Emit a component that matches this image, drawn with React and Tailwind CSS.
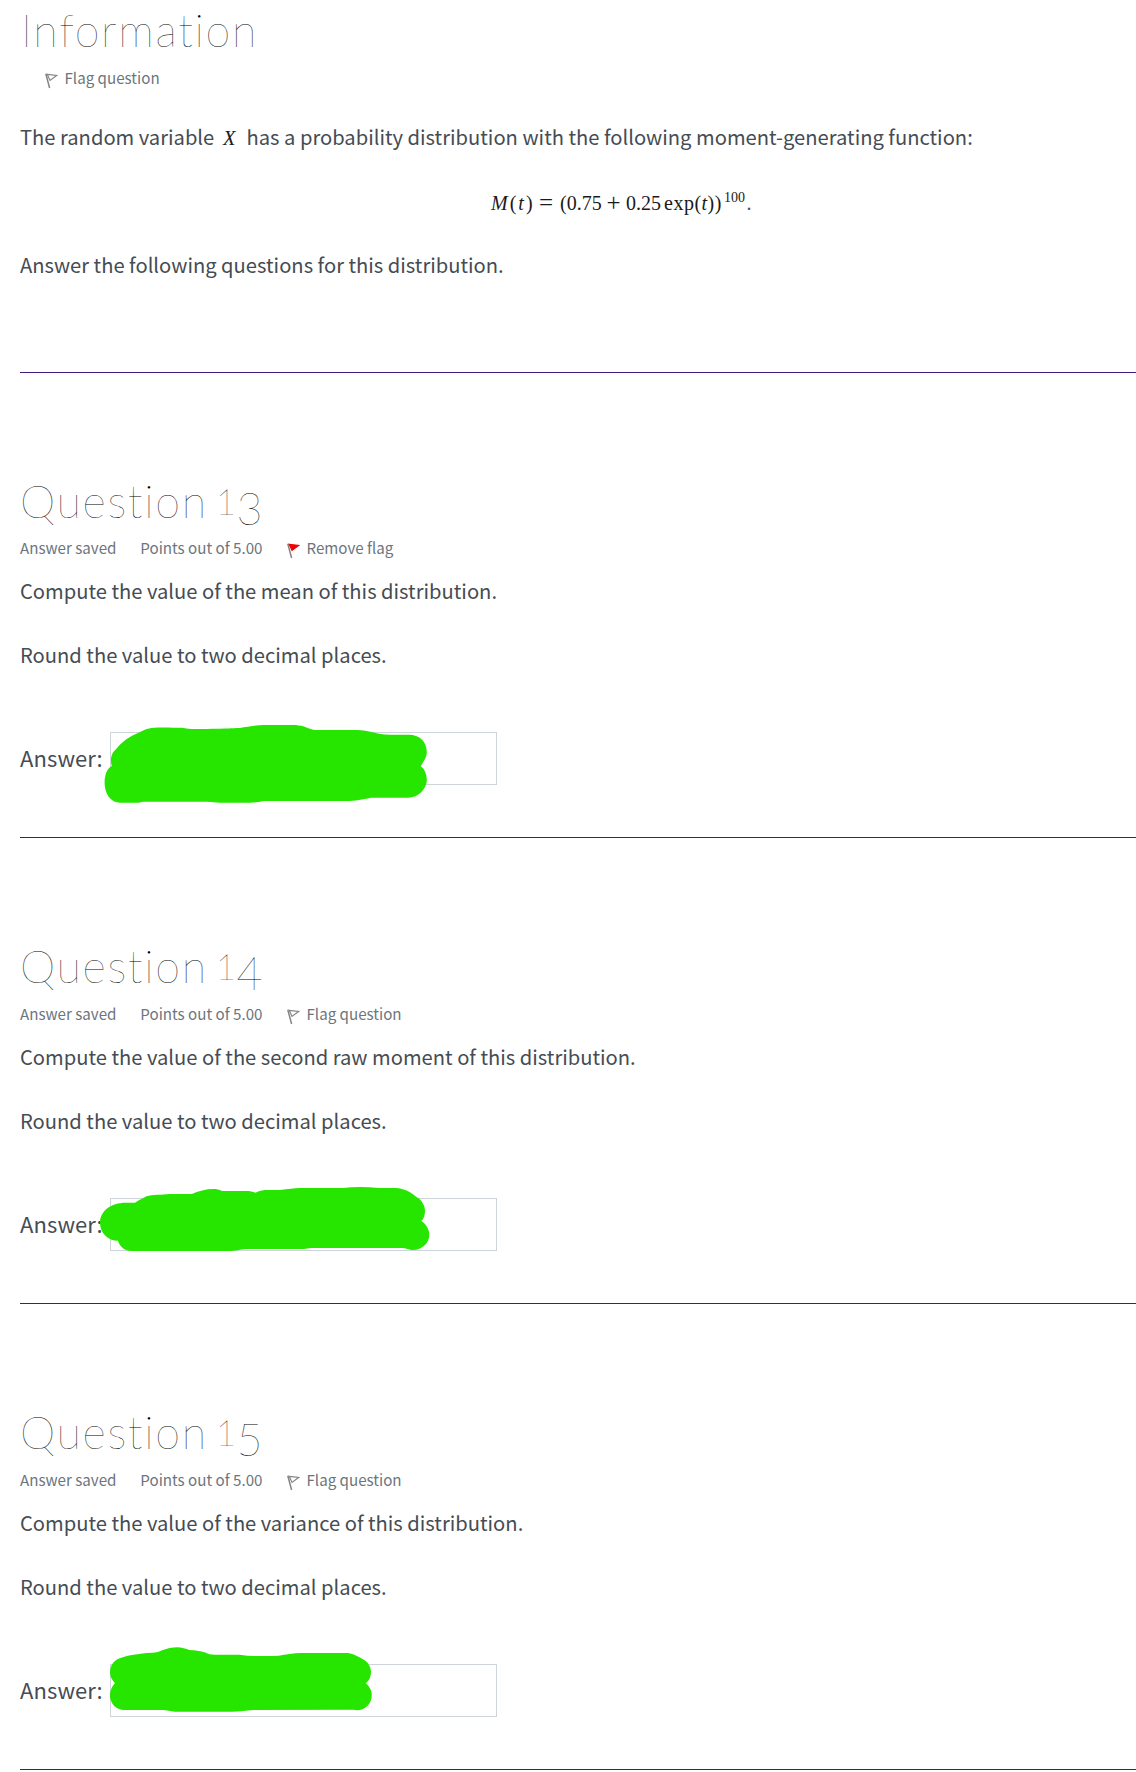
import React from "react";

const BODY = "text-[20.17px] leading-[32px] whitespace-nowrap";
const HEADING =
  "font-['Lato'] font-thin text-[45px] leading-[56px] h-[56px] tracking-[1.65px] text-black whitespace-nowrap";

function Flag({ active = false }) {
  return (
    <svg className="mt-[8px] h-4 w-[13px] shrink-0" viewBox="0 0 13 16" fill="none">
      <path d="M0.8 0.8 L4.6 15" stroke="#858585" strokeWidth="1.5" />
      <path
        d="M2.2 1.3 L11.6 2.5 L5 7.4 Z"
        stroke={active ? "#f00000" : "#858585"}
        fill={active ? "#f00000" : "none"}
        strokeWidth="1.2"
      />
    </svg>
  );
}

function FlagLink({ active }) {
  return (
    <span className="flex gap-[6.5px]">
      <Flag active={active} />
      <span>{active ? "Remove flag" : "Flag question"}</span>
    </span>
  );
}

function Information() {
  return (
    <section className="border-b border-[#42197c] pt-[2px] pb-[91px]">
      <h2 className={HEADING + " pl-px"}>Information</h2>
      <div className="mt-[7px] flex h-6 pl-[25px] text-[15.15px] leading-6 text-[#6c757d]">
        <FlagLink />
      </div>
      <p className={"mt-[32px] flex " + BODY}>
        <span className="w-[203px]">The random variable</span>
        <span className="w-[23.5px] translate-y-px font-['Liberation_Serif'] text-[20.5px] italic text-[#1a1a1a]">X</span>
        <span>has a probability distribution with the following moment-generating function:</span>
      </p>
      <div className="mt-[34px] flex h-8 pl-[471px] font-['Liberation_Serif'] text-[20px] leading-8 text-[#1a1a1a] whitespace-nowrap">
        <span className="w-[48px] tracking-[2px]">
          <i>M</i>(<i>t</i>)
        </span>
        <span className="w-[21px] text-[25px] font-['Liberation_Serif']">=</span>
        <span className="w-[46.5px]">(0.75</span>
        <span className="w-[19.5px] text-[25px]">+</span>
        <span className="w-[38px]">0.25</span>
        <span className="w-[60px] tracking-[0.5px]">
          exp(<i>t</i>))
        </span>
        <span className="w-[22.5px] -translate-y-[5px] text-[14px]">100</span>
        <span className="text-[#495057]">.</span>
      </div>
      <p className={"mt-[30px] " + BODY}>Answer the following questions for this distribution.</p>
    </section>
  );
}

function Question({ number, digit, flagged, text, first, children }) {
  return (
    <section className="border-b border-[#42197c] pt-[100px] pb-[52px]">
      <h2 className={HEADING + " flex"} aria-label={"Question " + number}>
        <span className="w-[195.5px]">Question</span>
        <span className="w-[21px] text-[36px] tracking-normal">1</span>
        <span className="translate-y-[7px]">{digit}</span>
      </h2>
      <div
        className={
          "flex h-6 text-[15.15px] leading-6 text-[#6c757d] " + (first ? "mt-[6px]" : "mt-[7px]")
        }
      >
        <span className="w-[120.3px]">Answer saved</span>
        <span className="w-[146.7px]">Points out of 5.00</span>
        <FlagLink active={flagged} />
      </div>
      <p className={"mt-[16px] " + BODY}>{text}</p>
      <p className={"mt-[32px] " + BODY}>Round the value to two decimal places.</p>
      <div className="relative mt-[61px] flex h-[53px] items-center">
        <span className="w-[90px] -translate-y-px text-[22px] tracking-[0.1px]">Answer:</span>
        <div className="h-[53px] w-[387px] border border-[#ced4da]" />
        <svg
          className="absolute -top-[22px] left-[70px] h-[96px] w-[350px]"
          viewBox="90 710 350 96"
          fill="#26e600"
        >
          {children}
        </svg>
      </div>
    </section>
  );
}

export default function App() {
  return (
    <main className="h-[1772px] w-[1136px] overflow-hidden bg-white pl-5 font-['Noto_Sans_CJK_SC',sans-serif] text-[#454c53]">
      <Information />
      <Question first number="13" digit="3" flagged text="Compute the value of the mean of this distribution.">
        <path d="M154 727.7 C163 727 174 727.7 182 727.7 C188 729 194 729 200 729 C209 729 217 728.7 225 728.5 C234 728.4 240 728 246 727 C252 725.8 258 725 264 725 L293 725 C297 725 300 725.5 304 726.5 C308 728 312 730 316 730 L357 730 C369 730 376 734.7 390 734.7 L409 734.7 C419 734.7 426.8 741 426.8 752 C426.8 758 423 762 420.7 766.3 C425 769 426.8 775 426.8 780 C426.8 789 418 797.7 408 797.7 L371 797.7 C362 799.5 356 801 346 801 L264 801 C258 802 255 802.7 250 802.7 L220 802.7 C215 802.7 212 801.7 207 801.7 L143 801.7 C140 802.7 137 802.7 134 802.7 L120 802.7 C111 802.7 104.6 794 104.6 783 C104.6 775 107 768 111.8 766 C110.5 762 110 754 116 749.3 C121 743 128 737 137.5 733.3 C142 731 147 728 154 727.7 Z" />
      </Question>
      <Question number="14" digit="4" text="Compute the value of the second raw moment of this distribution.">
        <path
          transform="translate(0 -466)"
          d="M125.7 1202.7 L135 1202.7 C139 1200 143 1198.5 146.4 1196.3 C152 1194.5 162 1195 169.6 1194 L191.8 1194 C198 1191 206 1189 213.6 1189 C217 1189 219 1189.5 222 1191 L246 1191 C250 1191 253 1191.5 255.4 1192.7 C260 1190.5 264 1190 268 1190 L280 1190 C288 1189 294 1188 300 1188 L343 1188 C354 1186.7 366 1186.7 378.6 1188 L396 1188 C404 1188.5 411 1192 416 1196.7 C421 1199 425 1205 425 1210.7 C425 1215 424 1218.5 421.4 1221 C426 1224 429.3 1229 429.3 1235 C429.3 1243 422 1250 413 1250 C409 1250 406 1248 402 1248 L310.7 1248 C306 1249 302 1249 298 1249 L246.4 1249 C240 1249.5 236 1251 228.6 1251 L131.4 1251 C125 1251 120 1247 117.9 1240.7 C108 1240.7 100 1233 100 1222.7 C100 1211 111 1202.7 125.7 1202.7 Z"
        />
      </Question>
      <Question number="15" digit="5" text="Compute the value of the variance of this distribution.">
        <path
          transform="translate(0 -932)"
          d="M121.4 1657.7 C126 1656 132 1655 137.5 1654.3 C144 1653 151 1653 157 1652.3 C163 1650 169 1647.5 176.8 1647.3 C182 1647.3 186 1649 189.3 1650 C195 1650.3 200 1651 205.4 1652.5 C208 1654 211 1654.7 214.3 1654.7 L239.3 1654.7 C245 1655.5 251 1656 257 1656 C264 1656 271 1656 278.6 1655.7 C286 1654.5 293 1653 301.8 1653 L348 1653 C354 1654 359 1657 364.3 1660 C369 1663 371 1668 371 1672 C371 1677 369 1681 365.7 1683.3 C369 1686 371.8 1690 371.8 1695 C371.8 1704 365 1710.3 357 1710.3 L353.6 1709.7 L253.6 1710 C246 1710.5 240 1711.7 232 1711.7 L175 1711.7 C170 1711.5 167 1710 162.5 1710 L124.3 1710 C116 1710 110 1703 110 1695.7 C110 1691 112 1686 115 1683.3 C112 1680 110 1677 110 1672.3 C110 1665 115 1659 121.4 1657.7 Z"
        />
      </Question>
    </main>
  );
}
